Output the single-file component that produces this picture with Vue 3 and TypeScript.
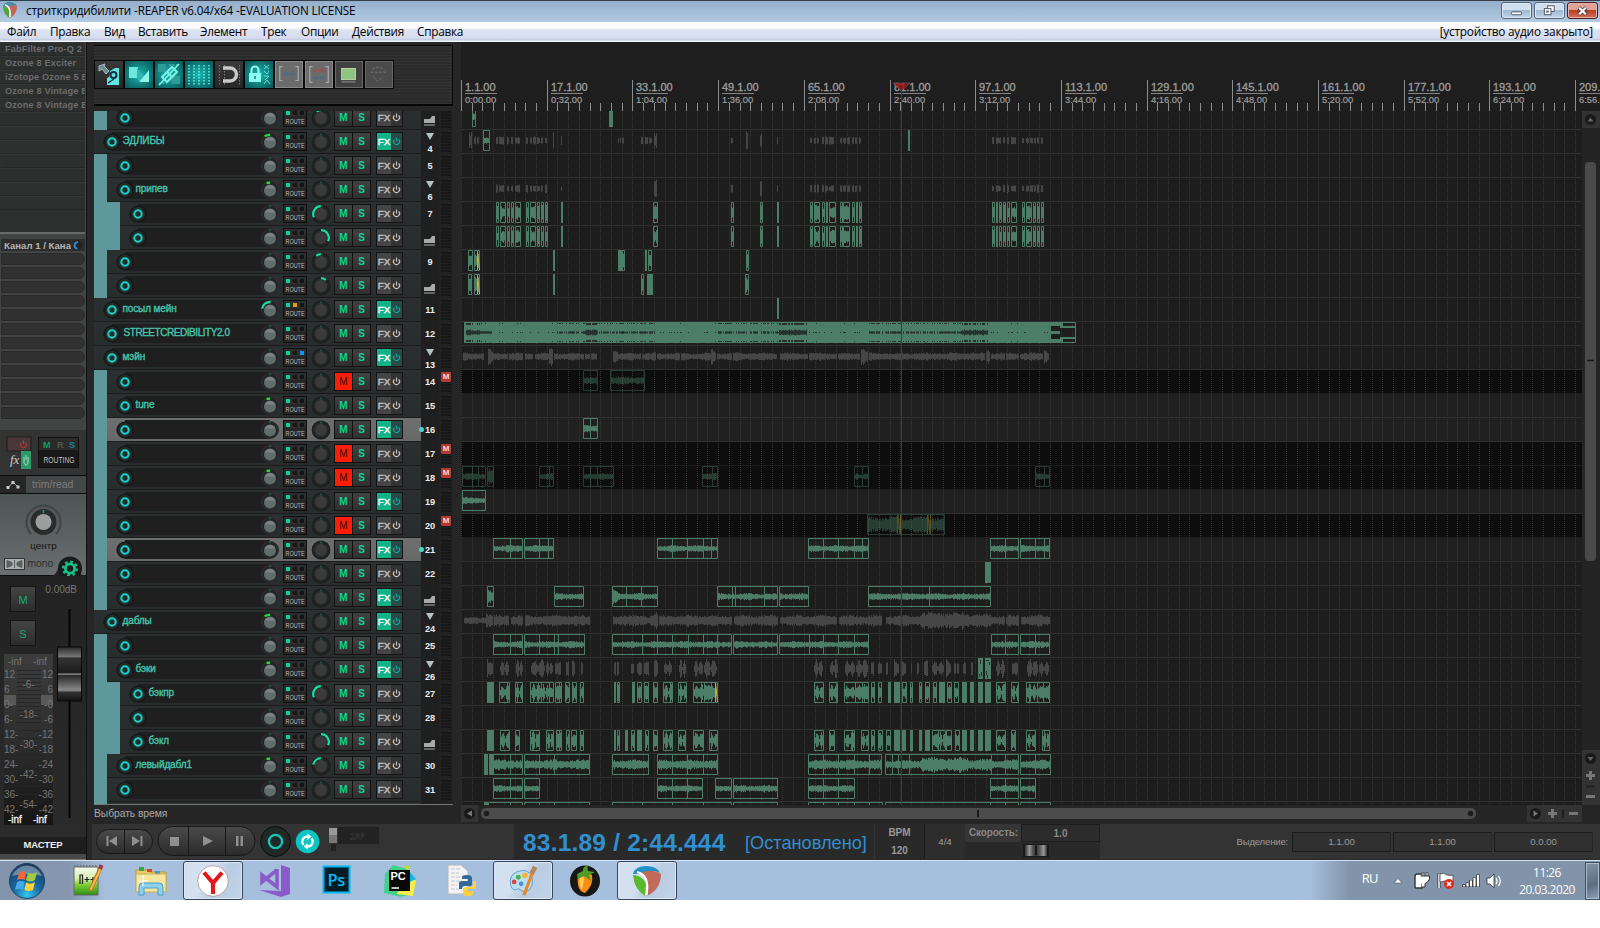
<script setup lang="ts">
interface Track {
  n: number
  d: number
  name?: string
  mute?: boolean
  fx?: boolean
  sel?: boolean
  kind?: 'open' | 'last'
  vol?: number
  pan?: number
  sq?: [number, string]
}

const tracks: Track[] = [
  { n: 3, d: 1, kind: 'last', pan: -35 },
  { n: 4, d: 0, name: 'ЭДЛИБЫ', fx: true, kind: 'open', vol: 2 },
  { n: 5, d: 1 },
  { n: 6, d: 1, name: 'припев', kind: 'open', vol: 1 },
  { n: 7, d: 2, pan: -115 },
  { n: 8, d: 2, kind: 'last', pan: 115 },
  { n: 9, d: 1, pan: -38 },
  { n: 10, d: 1, kind: 'last', pan: 38 },
  { n: 11, d: 0, name: 'посыл мейн', fx: true, vol: 3, sq: [1, '#e59a10'] },
  { n: 12, d: 0, name: 'STREETCREDIBILITY2.0' },
  { n: 13, d: 0, name: 'мэйн', fx: true, kind: 'open', sq: [2, '#0f96e8'] },
  { n: 14, d: 1, mute: true },
  { n: 15, d: 1, name: 'tune', vol: 1 },
  { n: 16, d: 1, fx: true, sel: true },
  { n: 17, d: 1, mute: true },
  { n: 18, d: 1, mute: true, vol: 1 },
  { n: 19, d: 1, fx: true },
  { n: 20, d: 1, mute: true },
  { n: 21, d: 1, fx: true, sel: true },
  { n: 22, d: 1 },
  { n: 23, d: 1, fx: true, kind: 'last' },
  { n: 24, d: 0, name: 'даблы', fx: true, kind: 'open', vol: 2 },
  { n: 25, d: 1 },
  { n: 26, d: 1, name: 'бэки', fx: true, kind: 'open', vol: 1 },
  { n: 27, d: 2, name: 'бэкпр', pan: -115 },
  { n: 28, d: 2 },
  { n: 29, d: 2, name: 'бэкл', kind: 'last', pan: 115 },
  { n: 30, d: 1, name: 'левыйдабл1', vol: 1, pan: -80 },
  { n: 31, d: 1 },
  { n: 32, d: 1 },
]

// Item notation: "a-b-c" = media item from a to c split at b; suffix s = solid, y = crossfade at the end.
const choir =
  '496-499 500-506 507-510 511-514 515-521 526-529 530-536 537-540 541-544 545-548 561-563s 653-658 731-734 760-763 777-779s 810-813 814-820 822-825 826-828s 829-836 840-843 843-850 852-855 856-858s 859-862 992-995 996-998s 999-1002 1003-1006 1007-1010 1011-1017 1022-1025 1026-1032 1033-1036 1037-1040 1041-1044'
const items: Record<number, string> = {
  3: '472-476 609-613s',
  4: '483-490 908-910s',
  7: choir,
  8: choir,
  9: '468-473 474-480y 553-555s 618-622s 622-625 645-647s 648-652 746-749',
  10: '468-472 474-480y 553-555s 641-644 647-653s 745-749',
  11: '777-779s',
  14: '583-598 610-645',
  16: '583-590-598',
  18: '462-472-478-486 487-494 539-549-554 583-590-597-614 702-712-718 854-862-869 1035-1044-1050',
  19: '462-486',
  20: '867-945',
  21: '493-510-523 524-539-548-554 657-672-687-703-711-718 808-823-838-854-862-869 990-1005-1019 1020-1035-1044-1050',
  22: '985-991s',
  23: '487-494 554-584 612-626-641-658 717-732-735-764-778 779-809 868-929-991',
  25: '493-510-523 524-539-554-558-585 612-642-657-672-688-703-717-732 733-778 779-809-823-838-854-869 991-1005-1019 1020-1035-1050',
  26: '978-983s 985-991s',
  27: '487-494s 499-510 515-523 530-541-549-554 555-559-562 565-570 572-577 580-584 614-616s 617-620 632-635s 637-642 644-649 653-658 663-673 678-687 693-704-711-718y 814-824 829-838 844-855-862-869 871-875 878-882 888-891s 894-900s 902-907 910-913 919-922 925-930 933-937 939-945s 947-952 954-959 962-967s 970-974s 978-983s 985-991s 996-1006 1011-1019 1026-1037-1043-1050',
  29: '487-494s 500-510 515-520 530-540 546-554 556-559-562 566-570 571-577 580-584 614-616s 617-620 625-628s 631-635 637-642s 645-649 653-658 663-673 678-686 693-704 709-718 814-824 829-835 844-855 861-869 871-875 878-883 886-891 894-900s 901-906s 910-913s 919-922s 925-930s 932-938-946 946-952 955-960 962-967s 970-974s 978-983s 985-991s 996-1006 1011-1016 1026-1036 1042-1050',
  30: '484-488s 489-493s 493-510-523 524-539-554-590 612-649 657-672-687-703-718 808-823-838-854-869-882 885-892-898-909-991-1005-1019 1020-1035-1051',
  31: '493-510-523 524-540 657-672-687-703 715-732 733-778 808-823-838-855 990-1005-1019 1020-1036',
  32: '484-488s 488-510-523 524-539-554-590 612-642-672-703-732 733-778 808-823-838-854-869-883 885-990-1005-1019 1020-1035-1051',
}
const softBits =
  '496-498 499-504 507-509 511-513 515-520 526-528 530-532 533-536 537-540 541-543 545-547 561-562 654-657t 731-733 760-762t 777-778 810-812 814-816 817-819 822-824 825-828 829-834 840-842 843-846 847-850 852-854 855-857 859-861 992-994 996-1001 1003-1005 1007-1009 1011-1016 1022-1024 1026-1029 1030-1033 1034-1036 1037-1039 1041-1043'
const ghosts: Record<number, string> = {
  4: '469-472t 474-476 477-479 553-554t 618-619 620-621 622-624 641-643 645-648 649-652 746-748t ' + softBits,
  6: softBits,
  13: '463-484 488-493t 493-508 509-523 525-533 535-549 549-553t 554-584 585-590 591-597 613-618t 618-641 642-656 657-680 681-711 711-716t 717-732 733-777 780-808 809-837 838-860 861-868t 869-985 986-990t 991-1005 1006-1019 1020-1043 1044-1049t',
  24: '464-486 486-493t 494-509 511-523 525-590 613-654 654-658t 659-732 734-778 780-837 839-882 886-1005 1006-1019 1021-1050',
  26: '487-493t 500-509 516-523 531-545 546-553 555-561 566-569 572-575 581-583 614-616 617-619 631-634 637-642 644-649 654-658t 664-672 679-686 694-703 704-717 814-823 830-838 845-855 856-868 871-874 878-882 886-888 894-899t 902-906 911-912 917-919 924-928 932-944 946-951t 954-956 957-959t 963-966 971-973 996-1005 1012-1018 1027-1038 1039-1049',
}

function rng(seed: number) {
  let s = seed * 2654435761 % 4294967296
  return () => {
    s = (s * 1664525 + 1013904223) % 4294967296
    return s / 4294967296
  }
}

const C = 10.5
function baseAmp(n: number, x: number): number {
  if (n === 20) return 6.5
  if (n === 30 && x > 920 && x < 991) return x < 968 ? 6 : 4.6
  if (n === 24 && x > 920 && x < 991) return x < 968 ? 7 : 5.6
  if (n === 24) return x < 486 ? 3 : 4.6
  if (n >= 26 && n <= 29) return 6.4
  if (n >= 7 && n <= 10) return 6
  if (n === 30) return 4
  if (n === 4 || n === 6) return 3.4
  if (n === 14 || n === 13) return 3.2
  return 2.8
}

function wave(n: number, a: number, b: number, tall = false): string {
  const r = rng(n * 97 + a)
  let p = ''
  const w = b - a
  for (let x = a; x < b; x++) {
    let amp = tall ? 7 : baseAmp(n, x)
    const t = (x - a + 0.5) / w
    if (n >= 26 && n <= 29 && w > 6) amp *= 0.25 + Math.abs(Math.sin(t * Math.PI * 2))
    const slow = 0.95 + 0.14 * Math.sin(x / 4.3 + n)
    let h = Math.max(1.5, amp * slow * (0.72 + 0.5 * r()))
    if (tall && w > 4) h *= 1.2 - 0.6 * t
    if (n === 23 && x >= 612 && x < 620) h += (620 - x) * 0.6
    h = Math.min(9.5, h)
    p += `M${x + 0.5} ${(C - h).toFixed(1)}V${(C + h * (0.9 + 0.25 * r())).toFixed(1)}`
  }
  return p
}

interface LaneArt { frames: string; fills: string; waves: string; ghost: string; fades: string; notch: string }
function art(t: Track): LaneArt {
  const out: LaneArt = { frames: '', fills: '', waves: '', ghost: '', fades: '', notch: '' }
  for (const tok of (items[t.n] ?? '').split(' ').filter(Boolean)) {
    const flag = /[sy]$/.exec(tok)?.[0]
    const xs = tok.replace(/[sy]$/, '').split('-').map(Number)
    const a = xs[0]
    const b = xs[xs.length - 1]
    if (flag === 's') {
      out.fills += `M${a} 0H${b}V21H${a}Z`
      continue
    }
    out.frames += `M${a + 0.5} .5H${b - 0.5}V20.5H${a + 0.5}Z`
    for (const m of xs.slice(1, -1)) out.frames += `M${m + 0.5} 0V21`
    for (let i = 0; i < xs.length - 1; i++) {
      out.waves += wave(t.n, xs[i] + 1, xs[i + 1], a === 487 && (t.n === 18 || t.n === 23))
    }
    if (flag === 'y') out.fades += `M${b - 2.5} 1L${b - 0.5} 20M${b - 2.5} 20V1`
  }
  if (t.n === 20) out.fades = 'M897.5 1V20M898 1L900 20M900.5 1V20M927.5 1V20M928 1L930 20M930.5 1V20'
  for (const tok of (ghosts[t.n] ?? '').split(' ').filter(Boolean)) {
    const [a, b] = tok.replace('t', '').split('-').map(Number)
    out.ghost += wave(t.n, a, b, tok.endsWith('t'))
  }
  if (t.n === 12) {
    out.fills = 'M464 0H1051V21H464ZM1051 0H1063V4H1051ZM1051 17H1063V21H1051ZM1060 4H1075V6H1060ZM1060 15H1075V17H1060ZM1051 9H1060V12H1051Z'
    out.frames = 'M464.5 .5H1075.5V20.5H464.5Z'
    const r = rng(5)
    for (let x = 466; x < 1050; x++) {
      const thick = x < 480 || (x > 584 && x < 597) || (x > 778 && x < 807) || (x > 960 && x < 988)
      const thin = (x > 555 && x < 656) || (x > 717 && x < 778) || (x > 868 && x < 961)
      const v = r()
      const h = thick ? 1.7 + v * 1.4 : thin ? (v > 0.25 ? 0.5 + v * 0.9 : 0) : x < 492 ? 1.2 : v > 0.78 ? 0.5 : 0
      if (h) out.notch += `M${x + 0.5} ${C - h}V${C + h}`
      if ((thick && v > 0.2) || (thin && v > 0.5) || v > 0.92) {
        out.notch += `M${x + 0.5} 1V${thick ? 3 : 2}M${x + 0.5} ${thick ? 18 : 19}V20`
      }
    }
  }
  if (t.n === 26) out.notch = 'M980.5 2V6M981.5 14V18M979.5 16V19M986 2.5H989M987.5 17V20M989.5 4V7M986.5 13V17'
  return out
}
const lanes = tracks.map((t) => ({ t, art: art(t) }))

const PITCH = 85.7
const gridX: number[] = []
for (let i = 0; i <= 104; i++) gridX.push(Math.round(461 + (i * PITCH) / 8) + 0.5)
const gridPath = gridX.map((x) => `M${x} 0V694`).join('')
const tickPath = gridX.map((x, i) => (i % 8 ? `M${x} 21V29` : `M${x} -2V29`)).join('')
const marks = Array.from({ length: 14 }, (_, i) => {
  const sec = i * 32
  return {
    x: Math.round(461 + i * PITCH) + 4,
    bar: `${1 + i * 16}.1.00`,
    time: `${Math.floor(sec / 60)}:${String(sec % 60).padStart(2, '0')}.00`,
  }
})

function arc(r: number, a0: number, a1: number): string {
  const pt = (a: number) => {
    const k = (a * Math.PI) / 180
    return `${(10 + r * Math.sin(k)).toFixed(2)} ${(10 - r * Math.cos(k)).toFixed(2)}`
  }
  return `M${pt(Math.min(a0, a1))}A${r} ${r} 0 0 1 ${pt(Math.max(a0, a1))}`
}
function volArc(v?: number): string {
  if (v === 3) return arc(8, -80, 4)
  if (v === 2) return 'M4.5 4L10 2.6'
  return v === 1 ? 'M6.5 3L10 2.6' : 'M10 1V3'
}

const menu: [string, number][] = [
  ['Файл', 43], ['Правка', 54], ['Вид', 34], ['Вставить', 62], ['Элемент', 61],
  ['Трек', 40], ['Опции', 51], ['Действия', 65], ['Справка', 60],
]
const inserts = ['FabFilter Pro-Q 2', 'Ozone 8 Exciter', 'iZotope Ozone 5 E', 'Ozone 8 Vintage E', 'Ozone 8 Vintage E', '', '', '', '', '', '', '']
const leftScale = ['12', '6', '0-', '6-', '12-', '18-', '24-', '30-', '36-', '42-']
const rightScale = ['12', '6', '-0', '-6', '-12', '-18', '-24', '-30', '-36', '-42']
const midScale = ['-6-', '-18-', '-30-', '-42-', '-54-']
</script>

<template>
  <div class="screen">
    <header class="title">
      <svg class="logo" viewBox="0 0 16 18"><path d="M1 5Q4 0 9 1Q15 2 15 6Q10 4 6 6Q3 6 1 5Z" fill="#4a8fa8" /><path d="M1 5Q5 6 8 9L7 17Q1 12 1 5Z" fill="#4ea53c" /><path d="M8 5Q15 3 15 7Q14 14 8 17Q9 11 5 6Z" fill="#c4665a" /><path d="M3 4Q9 5 8 16" stroke="#fff" fill="none" stroke-width="1.6" /></svg>
      <span class="caption">стриткридибилити -REAPER v6.04/x64 -EVALUATION LICENSE</span>
      <div class="winbtns">
        <i class="wb"><svg viewBox="0 0 30 16"><rect x="9.500" y="9.500" width="11" height="3" rx="1" fill="#fff" stroke="#4b5463" /></svg></i>
        <i class="wb"><svg viewBox="0 0 30 16"><rect x="13" y="3" width="7" height="6" fill="#fff" stroke="#4b5463" /><rect x="9.500" y="6" width="7" height="6.500" fill="#fff" stroke="#4b5463" /><rect x="12" y="8.500" width="2" height="1.500" fill="#7d93ad" stroke="#4b5463" stroke-width=".6" /></svg></i>
        <i class="wb close"><svg viewBox="0 0 30 16"><path d="M11 5L19 12M19 5L11 12" stroke="#4b3b40" stroke-width="4.400" /><path d="M11.500 5L18.500 12M18.500 5L11.500 12" stroke="#fff" stroke-width="2.400" /></svg></i>
      </div>
    </header>
    <nav class="menu">
      <span v-for="m in menu" :key="m[0]" :style="{ width: m[1] + 'px' }">{{ m[0] }}</span>
      <span class="audio">[устройство аудио закрыто]</span>
    </nav>

    <main class="app">
      <aside class="mixer">
        <div class="inserts">
          <div v-for="(s, i) in inserts" :key="i">{{ s }}</div>
        </div>
        <div class="sends">
          <div class="send"><span>Канал 1 / Канал</span><svg viewBox="0 0 10 10"><circle cx="5" cy="5" r="4.500" fill="#222" /><path d="M5.500 2A3 3 0 0 0 5 8" stroke="#2a8fd8" stroke-width="1.800" fill="none" /></svg></div>
          <div v-for="i in 12" :key="i" class="slot"></div>
        </div>
        <div class="fxroute">
          <svg viewBox="0 0 87 45">
            <rect x="7" y="7" width="24" height="14" fill="#4a3838" stroke="#1c1c1c" />
            <path d="M21.500 12.500A3 3 0 1 0 25.500 12.500M23.500 10.500V14" stroke="#e0322a" fill="none" />
            <rect x="21" y="21" width="10" height="18" fill="#2c9a6c" />
            <path d="M24 27V33Q26 37 28 33V27M26 25V30" stroke="#a6dfc4" fill="none" />
            <text x="10" y="34" class="fxi">fx</text>
            <rect x="38.500" y="7.500" width="40" height="30" fill="#191919" stroke="#111" />
            <rect x="39" y="8" width="39" height="12" fill="#2b2b2b" />
            <text x="43" y="18" class="mrs" fill="#129a68">M</text><text x="57" y="18" class="mrs" fill="#555">R</text><text x="69" y="18" class="mrs" fill="#1a7ea8">S</text>
            <text x="43.500" y="33" class="rt" textLength="31" lengthAdjust="spacingAndGlyphs">ROUTING</text>
          </svg>
        </div>
        <div class="trim"><svg viewBox="0 0 26 17"><path d="M8 12L13 6L18 11" stroke="#aaa" fill="none" /><path d="M6.500 10h3v3h-3zM11.500 5h3v3h-3zM16.500 9.500h3v3h-3z" fill="#ccc" /></svg><span>trim/read</span></div>
        <div class="panbox">
          <svg viewBox="0 0 87 82">
            <path d="M31 40A17 17 0 1 1 56 40" stroke="#3f4444" stroke-width="2" fill="none" />
            <circle cx="43.500" cy="28" r="13" fill="#2a2c2c" /><circle cx="43.500" cy="28" r="8" fill="#9c9e9e" />
            <path d="M43.500 16V19" stroke="#17a374" stroke-width="1.500" />
            <text x="43.500" y="55" class="cen">центр</text>
            <rect x="4.500" y="64.500" width="20" height="11" fill="#a9b1b1" stroke="#333" /><path d="M7 66.500L12 68.500V71.500L7 73.500ZM22 66.500L17 68.500V71.500L22 73.500ZM14.500 66V74" fill="#59605f" stroke="#59605f" />
            <text x="27.500" y="73" class="mono">mono</text>
            <path d="M0 82H50Q57 81 58 74L87 82Z" fill="#222" />
            <circle cx="70" cy="74.500" r="12" fill="#1b1b1b" />
            <circle cx="70" cy="74.500" r="4.600" fill="none" stroke="#15c28c" stroke-width="2.800" />
            <circle cx="70" cy="74.500" r="6.800" fill="none" stroke="#15c28c" stroke-width="2.400" stroke-dasharray="2.670 2.670" />
          </svg>
        </div>
        <div class="strip">
          <svg viewBox="0 0 87 261">
            <defs>
              <linearGradient id="bt" x1="0" y1="0" x2="0" y2="1"><stop offset="0" stop-color="#454545" /><stop offset="1" stop-color="#2b2b2b" /></linearGradient>
              <linearGradient id="mt" x1="0" y1="0" x2="0" y2="1"><stop offset="0" stop-color="#3c3c3c" /><stop offset=".5" stop-color="#2e2e2e" /><stop offset="1" stop-color="#151515" /></linearGradient>
              <linearGradient id="fd" x1="0" y1="0" x2="0" y2="1"><stop offset="0" stop-color="#2a2a2a" /><stop offset=".18" stop-color="#777" /><stop offset=".2" stop-color="#333" /><stop offset=".48" stop-color="#1c1c1c" /><stop offset=".5" stop-color="#999" /><stop offset=".53" stop-color="#282828" /><stop offset=".8" stop-color="#8a8a8a" /><stop offset=".84" stop-color="#333" /><stop offset="1" stop-color="#111" /></linearGradient>
            </defs>
            <text x="77" y="17" class="db">0.00dB</text>
            <rect x="10.500" y="10.500" width="25" height="25" fill="url(#bt)" stroke="#141414" /><text x="23" y="27.500" class="ms">M</text>
            <rect x="10.500" y="44.500" width="25" height="25" fill="url(#bt)" stroke="#141414" /><text x="23" y="61.500" class="ms">S</text>
            <rect x="4" y="78" width="49" height="171" fill="url(#mt)" />
            <path d="M17 94.500H41M17 98.500H41M17 102.500H41M17 106.500H41M17 110.500H41M17 114.500H41M17 118.500H41M17 122.500H41M17 126.500H41M17 130.500H41M17 134.500H41M17 138.500H41M17 142.500H41M17 146.500H41M17 154.500H41M17 162.500H41M17 170.500H41M17 178.500H41M17 186.500H41M17 194.500H41M17 202.500H41M17 210.500H41M17 218.500H41M17 226.500H41" stroke="#262626" />
            <path d="M4 119H16V129H4ZM41 119H53V129H41Z" fill="#585858" />
            <g class="sc">
              <text x="8" y="89">-inf</text><text x="33" y="89">-inf</text>
              <text v-for="(s, i) in leftScale" :key="'l' + i" x="4" :y="102 + i * 15">{{ s }}</text>
              <text v-for="(s, i) in rightScale" :key="'r' + i" x="53" :y="102 + i * 15" text-anchor="end">{{ s }}</text>
              <text v-for="(s, i) in midScale" :key="'m' + i" x="28.500" :y="112 + i * 30" text-anchor="middle">{{ s }}</text>
              <text x="8" y="247" class="lit">-inf</text><text x="33" y="247" class="lit">-inf</text>
            </g>
            <path d="M69.500 33V242" stroke="#050505" stroke-width="2" />
            <rect x="57.500" y="71" width="24" height="54" fill="url(#fd)" stroke="#080808" />
          </svg>
        </div>
        <div class="master">МАСТЕР</div>
        <div class="mfoot"></div>
      </aside>

      <section class="right">
        <div class="work">
          <div class="tcp">
            <div class="toolbar">
              <div class="tools">
                <i class="tb"><svg viewBox="0 0 28 27"><path d="M4 5L10 3L9 5L14 10L11 13L7 8L4 10Z" fill="#6d8a8c" stroke="#a7bcbc" /><path d="M12 24V17Q15 17 15 10L20 7H24V24Z" fill="#5fe6e0" /><circle cx="18.500" cy="14" r="4" fill="#134" /><circle cx="18.500" cy="14" r="2" fill="#5fe6e0" /><path d="M13 22L19 18" stroke="#134" stroke-width="1.500" /></svg></i>
                <i class="tb on"><svg viewBox="0 0 28 27"><path d="M4 6H13V17H4Z" fill="#6fe9df" /><path d="M12 7L20 16V21H14L12 17Z" fill="#2fb5ae" /><path d="M15 20L24 9V21H15Z" fill="#8ff5ea" /></svg></i>
                <i class="tb on"><svg viewBox="0 0 28 27"><path d="M3 3H11V11H3ZM17 15H25V23H17Z" fill="#2f9c97" /><path d="M4 24L24 3" stroke="#7df3e8" stroke-width="1.800" /><path d="M7 16L12 11L17 16L12 21ZM12 11L17 6L22 11L17 16Z" stroke="#7df3e8" stroke-width="2" fill="none" /><path d="M14 4H24M4 22H12" stroke="#5fd9cf" stroke-dasharray="2 1.500" /></svg></i>
                <i class="tb on"><svg viewBox="0 0 28 27"><path d="M4 4V24M9 4V24M14 4V24M19 4V24M24 4V24" stroke="#6ff7ec" stroke-width="1.400" stroke-dasharray="1.500 1.500" /></svg></i>
                <i class="tb"><svg viewBox="0 0 28 27"><path d="M4.500 4V24M9.500 4V24M24.500 4V24" stroke="#777" stroke-dasharray="1.500 1.500" /><path d="M8 7H15A6.500 6.500 0 0 1 15 20H8" stroke="#c9c9c9" stroke-width="3.400" fill="none" /></svg></i>
                <i class="tb on"><svg viewBox="0 0 28 27"><rect x="4" y="12" width="12" height="9" fill="#8bfff2" /><path d="M6.500 12V9A3.500 3.500 0 0 1 13.500 9V12" stroke="#8bfff2" stroke-width="2.200" fill="none" /><path d="M10 15V18" stroke="#0b7a76" stroke-width="1.500" /><path d="M19 4L24 8M24 4L19 8M19 10L22 13L24 10M19 15H24L20 19M19 23L22 19L25 23" stroke="#5fd9cf" fill="none" /></svg></i>
                <i class="tb off"><svg viewBox="0 0 28 27"><path d="M7 5H4V20H7M21 5H24V20H21" stroke="#a8a8a8" stroke-width="1.300" fill="none" /><path d="M7 13H21M10 10V16L13 13ZM18 10V16L15 13Z" stroke="#496a86" fill="#496a86" /></svg></i>
                <i class="tb off"><svg viewBox="0 0 28 27"><path d="M7 5H4V22H7M21 5H24V22H21" stroke="#a8a8a8" stroke-width="1.300" fill="none" /><path d="M7 9H21M10 7V11L13 9ZM18 7V11L15 9Z" stroke="#9a5050" fill="#9a5050" /><path d="M7 17H21M10 15V19L13 17ZM18 15V19L15 17Z" stroke="#496a86" fill="#496a86" /></svg></i>
                <i class="tb dim"><svg viewBox="0 0 28 27"><rect x="6" y="7" width="15" height="12" fill="#8fc583" stroke="#bdd8a8" /><path d="M6 21.500H21" stroke="#999" /></svg></i>
                <i class="tb off dark"><svg viewBox="0 0 28 27"><path d="M5 11H21M7 8Q13 3 19 8M8 16L13 21L18 16" stroke="#777" fill="none" stroke-dasharray="3 1.500" /></svg></i>
              </div>
            </div>
            <div class="tracks">
              <div v-for="t in tracks" :key="t.n" class="track" :class="{ sel: t.sel }">
                <div class="depth" :style="{ width: t.d * 13 + 'px' }"></div>
                <div class="panel">
                  <svg class="arm" viewBox="0 0 20 20"><circle cx="10" cy="10" r="8.600" fill="#151717" /><circle cx="10" cy="10" r="7.200" fill="#252a2a" /><circle cx="10" cy="10" r="3.700" fill="none" stroke="#14d2c6" stroke-width="2.100" /></svg>
                  <div class="name" :class="{ tight: t.n === 12 }">{{ t.name }}</div>
                  <svg class="knob" viewBox="0 0 20 20"><circle cx="10" cy="10" r="8.500" fill="#252525" stroke="#303030" /><circle cx="10" cy="10.500" r="6" fill="#626c6c" /><path d="M5 8.500A5.500 5.500 0 0 1 15 8.500Z" fill="#7b8383" /><path :d="volArc(t.vol)" :stroke="t.vol === 3 ? '#17dc9c' : t.vol ? '#1fe03a' : '#17844f'" :stroke-width="t.vol ? 2.3 : 1" fill="none" /></svg>
                  <div class="route">
                    <div class="sqs"><i class="g"></i><i :style="{ background: t.sq && t.sq[0] === 1 ? t.sq[1] : '#151717' }"></i><i :style="{ background: t.sq && t.sq[0] === 2 ? t.sq[1] : '#151717' }"></i></div>
                    <svg viewBox="0 0 22 9"><text x="1.500" y="7.500" textLength="19" lengthAdjust="spacingAndGlyphs">ROUTE</text></svg>
                  </div>
                  <svg class="pan" viewBox="0 0 20 20"><circle cx="10" cy="10" r="8.800" fill="#252727" stroke="#1b1c1c" stroke-width="1.200" /><circle cx="10" cy="10" r="6" fill="#3a3a3a" /><path v-if="t.pan" :d="arc(7.8, 0, t.pan)" stroke="#14e0a0" stroke-width="2.2" fill="none" /><path v-else d="M10 1.500V3.500" stroke="#17844f" /></svg>
                  <div class="btns"><b :class="{ muted: t.mute }">M</b><b>S</b></div>
                  <div class="fx" :class="{ lit: t.fx }"><span>FX</span><svg viewBox="0 0 12 17"><path d="M3.600 6.200A3.300 3.300 0 1 0 8.400 6.200M6 4V8.500" fill="none" stroke-width="1.300" stroke="currentColor" /></svg></div>
                </div>
                <div class="num" :class="t.kind">
                  <i v-if="t.sel" class="dot"></i>
                  <svg v-if="t.kind === 'open'" viewBox="0 0 8 7"><path d="M0 0H8L4 7Z" fill="#b4c4c6" /></svg>
                  <svg v-if="t.kind === 'last'" class="fold" viewBox="0 0 12 10"><path d="M0 3H6L8 0H11V7H0Z" fill="#aaa" /><path d="M0 9H11" stroke="#aaa" /></svg>
                  <span v-else>{{ t.n }}</span>
                </div>
                <div class="vu"><b v-if="t.mute">M</b></div>
              </div>
            </div>
          </div>

          <div class="arrange">
            <svg class="ruler" viewBox="461 -40 1139 69">
              <path :d="tickPath" stroke="#8c8c8c" />
              <g v-for="m in marks" :key="m.x">
                <text :x="m.x" y="9" class="bar">{{ m.bar }}</text>
                <path :d="`M${m.x} 11.500H${m.x + 32}`" stroke="#858585" />
                <text :x="m.x" y="21" class="time">{{ m.time }}</text>
              </g>
              <path d="M893 1H910L901.500 9Z" fill="#a01515" opacity=".85" stroke="#666" stroke-width=".6" />
              <path d="M901.500 8V29" stroke="#b30a0a" />
            </svg>
            <div class="field">
              <div class="lanes">
                <svg class="grid" viewBox="461 0 1121 694"><path :d="gridPath" stroke="#363636" stroke-dasharray="1 1" /></svg>
                <div v-for="l in lanes" :key="l.t.n" class="lane" :class="{ muted: l.t.mute, alt: l.t.n > 14 && l.t.n < 22 && !l.t.mute }">
                  <svg viewBox="461 0 1121 24" :class="{ faded: l.t.mute }">
                    <path :d="l.art.ghost" stroke="#464646" />
                    <path :d="l.art.fills" fill="#4c7e67" />
                    <path :d="l.art.frames" stroke="#4c7e67" fill="none" />
                    <path :d="l.art.waves" stroke="#4c7e67" />
                    <path :d="l.art.notch" stroke="#26322d" />
                    <path :d="l.art.fades" stroke="#c9ae2c" fill="none" />
                  </svg>
                </div>
                <svg class="grid cursor" viewBox="461 0 1121 694"><path d="M901.500 0V694" stroke="#b30a0a" /></svg>
              </div>
              <svg class="vbar" viewBox="0 0 18 694">
                <rect width="18" height="17" fill="#333" /><circle cx="8.500" cy="8.500" r="5.500" fill="#1a1a1a" /><path d="M5.500 10.500H11.500L8.500 6.500Z" fill="#666" />
                <rect x="3" y="51" width="11" height="399" rx="4" fill="#4a4a4a" /><path d="M5 249.500H12" stroke="#151515" stroke-width="1.500" />
                <rect y="639" width="18" height="55" fill="#333" /><circle cx="8.500" cy="647.500" r="5.500" fill="#1a1a1a" /><path d="M5.500 646H11.500L8.500 650Z" fill="#666" />
                <path d="M4 664.500H13M8.500 660V669M4 685.500H13" stroke="#777" stroke-width="3" /><path d="M4 675.500H13" stroke="#222" stroke-width="2" />
              </svg>
            </div>
          </div>
        </div>

        <div class="under">
          <div class="hint">Выбрать время</div>
          <svg class="hbar" viewBox="461 0 1139 19">
            <rect x="461" width="17" height="17" fill="#333" /><circle cx="469.500" cy="8.500" r="5.500" fill="#1a1a1a" /><path d="M472 5.500V11.500L467 8.500Z" fill="#777" />
            <rect x="481" y="3" width="995" height="11" rx="5" fill="#4c4c4c" /><circle cx="486.500" cy="8.500" r="2.700" fill="#1d1d1d" /><circle cx="1470.500" cy="8.500" r="2.700" fill="#1d1d1d" /><path d="M978 5V12" stroke="#191919" stroke-width="2" />
            <rect x="1527" width="55" height="17" fill="#333" /><circle cx="1535.500" cy="8.500" r="5.500" fill="#1a1a1a" /><path d="M1533.500 5.500V11.500L1538 8.500Z" fill="#777" /><path d="M1548 8.500H1557M1552.500 4V13M1569 8.500H1578" stroke="#777" stroke-width="3" /><path d="M1563 4V13" stroke="#222" stroke-width="2" />
          </svg>
        </div>

        <div class="transport">
          <svg class="deck" viewBox="92 0 422 35">
            <defs><linearGradient id="pl" x1="0" y1="0" x2="0" y2="1"><stop offset="0" stop-color="#4a4a4a" /><stop offset="1" stop-color="#2b2b2b" /></linearGradient></defs>
            <rect x="96.500" y="5.500" width="56" height="24" rx="12" fill="url(#pl)" stroke="#181818" /><path d="M124.500 5V30" stroke="#181818" />
            <path d="M107.500 12V22M141.500 12V22" stroke="#909090" stroke-width="2" /><path d="M117 12V22L109 17ZM132 12V22L140 17Z" fill="#909090" />
            <rect x="158" y="2.500" width="97" height="29" rx="14.500" fill="url(#pl)" stroke="#181818" /><path d="M188.500 3V31M225.500 3V31" stroke="#181818" />
            <path d="M170 13H179V22H170ZM203 12V22L213 17ZM236 12H238.500V22H236ZM240.500 12H243V22H240.500Z" fill="#909090" />
            <circle cx="275.500" cy="17.500" r="15" fill="#1f2727" stroke="#0d0d0d" /><circle cx="275.500" cy="17.500" r="6.600" fill="none" stroke="#18c2b4" stroke-width="2.400" />
            <circle cx="307.500" cy="17.500" r="11.800" fill="#0cc5c2" /><path d="M303.500 20.800A5 5 0 0 1 308 12.600M311.500 14.200A5 5 0 0 1 307 22.400" stroke="#fff" stroke-width="2.200" fill="none" /><path d="M307 9.500L311.500 12.500L307.500 16ZM308 25.500L303.500 22.500L307.500 19Z" fill="#fff" />
            <rect x="338" y="3" width="41" height="17" fill="#222" /><rect x="329" y="4" width="8" height="15" fill="#777" /><rect x="329" y="4" width="8" height="7" fill="#999" /><path d="M331 20H336V27H331Z" fill="#222" /><text x="350" y="15" class="rate" textLength="15">1.0.0</text>
          </svg>
          <div class="status"><b>83.1.89 / 2:44.444</b><span>[Остановлено]</span></div>
          <div class="bpm"><span>BPM</span><span>120</span></div>
          <div class="sig">4/4</div>
          <div class="speed">
            <div class="sp1"><span>Скорость:</span><b>1.0</b></div>
            <svg viewBox="0 0 135 15"><defs><linearGradient id="sl"><stop offset="0" stop-color="#333" /><stop offset=".2" stop-color="#999" /><stop offset=".35" stop-color="#555" /><stop offset=".5" stop-color="#333" /><stop offset=".65" stop-color="#555" /><stop offset=".85" stop-color="#999" /><stop offset="1" stop-color="#333" /></linearGradient></defs><rect x="58" width="26" height="13" fill="#191919" /><rect x="60" y="1" width="22" height="11" fill="url(#sl)" /><path d="M71 2V11" stroke="#0c0c0c" stroke-width="1.500" /></svg>
          </div>
          <div class="selection"><span>Выделение:</span><i>1.1.00</i><i>1.1.00</i><i>0.0.00</i></div>
        </div>
      </section>
    </main>

    <footer class="taskbar">
      <svg class="ti start" viewBox="0 0 40 38"><defs><radialGradient id="orb" cx=".5" cy=".9" r=".9"><stop offset="0" stop-color="#35c5f2" /><stop offset=".45" stop-color="#17679f" /><stop offset="1" stop-color="#1a3a5c" /></radialGradient></defs><circle cx="20" cy="19" r="17.500" fill="url(#orb)" stroke="#1d4263" /><path d="M5 14A16 16 0 0 1 35 14Q20 10 5 14Z" fill="#fff" opacity=".35" /><path d="M12 11Q15 8 19 10L18 18Q14 16 10 18Z" fill="#f2683c" /><path d="M21 11Q26 13 30 10L28 18Q24 21 19 18Z" fill="#9fcb3d" /><path d="M10 20Q14 18 17.500 20L16 28Q12 26 8 28Z" fill="#45a8ec" /><path d="M19 20.500Q24 23 28 20L26 28Q22 30 17.500 28Z" fill="#ffd13b" /></svg>
      <svg class="ti npp" viewBox="0 0 32 38"><defs><linearGradient id="ng" x1="0" y1="0" x2="0" y2="1"><stop offset="0" stop-color="#f4faef" /><stop offset=".4" stop-color="#d7efb0" /><stop offset=".65" stop-color="#7ccb2e" /><stop offset="1" stop-color="#2b8f1a" /></linearGradient></defs><path d="M1 5H25V33H1Z" fill="url(#ng)" stroke="#666" /><path d="M1 4H25" stroke="#777" stroke-width="2" stroke-dasharray="1.500 1.500" /><path d="M7 22V13H9.500V22M11.500 17.500H16.500M14 15V20M17.500 17.500H22.500M20 15V20" stroke="#222" stroke-width="1.200" fill="none" /><path d="M17 29L28 5" stroke="#b87420" stroke-width="4" /><path d="M17.500 28L27.500 7" stroke="#f7b84a" stroke-width="2" /><path d="M27 7L28.500 3" stroke="#a03a4a" stroke-width="4" /></svg>
      <svg class="ti exp" viewBox="0 0 32 38"><path d="M1 8H12L14 10H31V29H1Z" fill="#e9cd6a" stroke="#b89a3c" /><path d="M4 5H9V9H4Z" fill="#3aa648" /><path d="M12 7H17V10H12Z" fill="#d24a2c" /><path d="M20 9H25V12H20Z" fill="#3c9ad8" /><path d="M1 12H31V30H1Z" fill="#f6e7a0" stroke="#c7ae55" /><path d="M4 33V25Q4 21 8 21H24Q28 21 28 25V33H23V26H9V33Z" fill="#8fd0ee" stroke="#4d9cc7" /><path d="M8 13V24M3 19H13" stroke="#fff" /></svg>
      <div class="task yb"><svg viewBox="0 0 32 32"><circle cx="16" cy="16" r="15.300" fill="#fff" stroke="#a88" stroke-width=".7" /><path d="M7 7.500L16 18L25 7.500M16 17V29" stroke="#e01a1a" stroke-width="4.200" fill="none" /></svg></div>
      <svg class="ti vs" viewBox="0 0 34 38"><path d="M23 3L32 6V32L23 35L1 28L23 29Z" fill="#8a5cc9" /><path d="M19 8V25L4 13V20L19 8M4 12V21M19 7V26" stroke="#8a5cc9" stroke-width="3.600" fill="none" /></svg>
      <svg class="ti ps" viewBox="0 0 30 38"><rect x="1.500" y="4.500" width="26" height="26" fill="#001d26" stroke="#00b7f0" stroke-width="2" /><text x="5.500" y="24" class="pst">Ps</text></svg>
      <svg class="ti pc" viewBox="0 0 34 38"><path d="M2 12L10 3L20 6L26 3L27 12L33 18L28 32L18 35L1 31Z" fill="#42d08a" /><path d="M25 8L33 19L30 34L14 32Z" fill="#f3ee4c" /><path d="M26 9L33 17L27 20Z" fill="#12b5ea" /><path d="M20 5L26 3L27 10Z" fill="#b3e04c" /><rect x="6" y="8" width="21" height="21" fill="#090909" /><text x="7.500" y="18" class="pct">PC</text><path d="M8.500 26H16" stroke="#fff" stroke-width="1.500" /></svg>
      <svg class="ti py" viewBox="0 0 34 38"><path d="M1 3H14L21 9V32H1Z" fill="#f3f3f3" stroke="#b6b6b6" /><path d="M4 7H13M4 11H12M4 15H16M4 19H14M4 23H10M4 27H12" stroke="#c3c8cc" stroke-dasharray="4 1" /><path d="M12 27V21Q12 19 15 19H21V17H15V15Q15 13 20 13Q25 13 25 16V22Q25 24 22 24H18Q15 24 15 27Z" fill="#35699c" /><path d="M29 19V25Q29 27 26 27H21V29H26V31Q26 34 21 34Q16 34 16 31V27Q16 25 19 25H23Q26 25 26 22V19Z" fill="#ffd23c" /></svg>
      <div class="task pb"><svg viewBox="0 0 32 34"><path d="M3 22Q0 11 10 7Q21 3 25 12Q28 21 22 27Q18 30 14 27Q11 24 9 26Q5 28 3 22Z" fill="#b9def2" stroke="#5c9cc4" /><circle cx="6.500" cy="18" r="2.500" fill="#d9483a" /><circle cx="11" cy="13" r="2.600" fill="#53b045" /><circle cx="18" cy="11" r="3" fill="#f2b632" /><circle cx="14" cy="20" r="2.500" fill="#4b93cf" /><path d="M17 32L26 8" stroke="#e68428" stroke-width="3.200" /><path d="M25 9L29 2" stroke="#b98457" stroke-width="5" /></svg></div>
      <svg class="ti fl" viewBox="0 0 32 38"><ellipse cx="16" cy="19" rx="15" ry="15.500" fill="#171717" /><path d="M9 13Q16 8 23 13Q25 23 16 31Q7 29 9 13Z" fill="#f98e14" /><path d="M11 15Q14 12 15 16Q14 25 13 28Q9 23 11 15Z" fill="#ffcb52" /><path d="M8 12L14 9Q13 5 19 3Q18 7 19 9L26 10L20 13L22 19L15 14L9 17Z" fill="#4c9c25" /></svg>
      <div class="task rb"><svg viewBox="0 0 30 32"><path d="M1 9Q3 1 14 1Q25 1 28 8Q20 4 13 8Q7 9 1 9Z" fill="#2490c8" /><path d="M1 10Q9 10 14 18L13 31Q2 24 1 10Z" fill="#58ba2c" /><path d="M9 8Q20 3 29 9Q29 24 15 31Q18 15 9 8Z" fill="#c26a58" /><path d="M5 7Q18 10 14.500 30" stroke="#fff" stroke-width="2.200" fill="none" /></svg></div>
      <div class="tray">
        <span class="ru">RU</span>
        <svg viewBox="0 0 116 22">
          <path d="M4 13H12L8 8.500Z" fill="#fff" stroke="#51627a" stroke-width=".7" />
          <path d="M33 4H27Q25 4 25 7V17Q25 18 26 18H32V13" fill="#fff" stroke="#333" stroke-width="1.400" /><path d="M33 2V6M37 2V6" stroke="#333" stroke-width="2.500" /><path d="M33 2.500V6M37 2.500V6" stroke="#fff" stroke-width="1" /><path d="M30.500 6H39.500V9Q38 13 35 13.500V17H32" stroke="#333" fill="#fff" stroke-width="1" />
          <path d="M49 3V18" stroke="#333" stroke-width="3" /><path d="M49 3.500V18" stroke="#fff" stroke-width="1.500" /><path d="M50 4Q54 2 57 5Q61 6 63 5V12Q58 13 55 11L50 12Z" fill="#fff" stroke="#444" stroke-width=".8" /><circle cx="59" cy="14" r="5" fill="#dd2a1c" /><path d="M57 12L61 16M61 12L57 16" stroke="#fff" stroke-width="1.600" />
          <path d="M74 14.500V17M77.500 12.500V17M81 10V17M84.500 7.500V17M88 4.500V17" stroke="#333" stroke-width="3.600" /><path d="M74 15V16.500M77.500 13V16.500M81 10.500V16.500M84.500 8V16.500M88 5V16.500" stroke="#fff" stroke-width="2.200" />
          <path d="M97 8H100L104 4V18L100 14H97Z" fill="#fff" stroke="#333" stroke-width=".8" /><path d="M106 8Q108 11 106 14M108.500 6Q112 11 108.500 16" stroke="#fff" stroke-width="1.200" fill="none" />
        </svg>
        <div class="clock"><span>11:26</span><span>20.03.2020</span></div>
        <i class="peek"></i>
      </div>
    </footer>
  </div>
</template>

<style>
html, body { margin: 0; background: #fff; overflow: hidden; }
</style>

<style scoped>
.screen { width: 1600px; height: 928px; background: #fff; font-family: "Liberation Sans", Arial, sans-serif; overflow: hidden; }
.screen * { box-sizing: border-box; }
svg { display: block; }
i { font-style: normal; }

.title { height: 22px; display: flex; align-items: flex-start; background: linear-gradient(#94afcc, #b3cae3); border-top: 1px solid #35404c; padding-left: 2px; }
.logo { width: 16px; height: 18px; }
.caption { margin-left: 8px; font: 11.700px/19px "Open Sans", "Noto Sans", sans-serif; color: #000; flex: 1; letter-spacing: -.14px; }
.winbtns { display: flex; gap: 2px; padding: 1px 2px 0 0; }
.wb { width: 31px; height: 17px; border: 1px solid #56657a; border-radius: 3px; background: linear-gradient(#d2dfee 0 45%, #a2b9d3 50%, #bfd4e9); box-shadow: inset 0 0 0 1px #dfe9f4; }
.wb svg { width: 29px; height: 15px; }
.wb.close { border-color: #4a1c20; background: linear-gradient(#dfa297 0 45%, #b73f26 50%, #d4715a); box-shadow: inset 0 0 0 1px #e6b1a8; }
.menu { height: 20px; display: flex; background: linear-gradient(#fdfdff 0 30%, #dde3f2 40%, #d5dcee 80%, #c3cade 90%, #f6f8fc 96%); padding-left: 7px; font: 11.800px/19px "Open Sans", "Noto Sans", sans-serif; color: #000; letter-spacing: -.27px; white-space: nowrap; }
.audio { margin-left: auto; padding-right: 7px; letter-spacing: -.22px; }

.app { height: 818px; display: flex; background: #262626; }
.mixer { width: 87px; background: #454646; border-right: 1px solid #111; display: flex; flex-direction: column; overflow: hidden; }
.inserts { height: 192px; width: 85px; padding-left: 1px; background: #2e3030; border-bottom: 2px solid #6a6a6a; overflow: hidden; }
.inserts div { height: 14px; border-bottom: 1px solid #262727; border-top: 1px solid #363737; background: #2d2e2e; font: bold 9.200px/12px "Liberation Sans", sans-serif; letter-spacing: .15px; color: #6c6c6c; padding-left: 4px; white-space: nowrap; overflow: hidden; }
.sends { height: 196px; width: 85px; padding: 5px 0 0 1px; background: #424444; }
.send { height: 12px; margin-bottom: 2px; background: #2c2c2c; display: flex; align-items: center; font: bold 9.600px/11px "Liberation Sans", sans-serif; color: #b5b5b5; white-space: nowrap; }
.send span { width: 70px; overflow: hidden; padding-left: 3px; }
.send svg { width: 11px; height: 11px; margin-left: 1px; }
.slot { height: 12px; border-radius: 0 6px 6px 0; background: #313131; border: 1px solid #2a2a2a; margin-bottom: 2px; }
.fxroute { height: 45px; background: #333; }
.fxroute svg { width: 87px; height: 45px; }
.fxi { font: italic 13px "Liberation Serif", serif; fill: #d0d0d0; }
.mrs { font: bold 9px "Liberation Sans", sans-serif; }
.rt { font: 8.400px "Liberation Sans", sans-serif; fill: #c0c0c0; }
.trim { height: 19px; border-top: 1px solid #0b0b0b; border-bottom: 1px solid #0b0b0b; display: flex; background: #3c3e3e; font: 10.500px/17px "Liberation Sans", sans-serif; color: #7c7c7c; }
.trim svg { width: 26px; height: 17px; background: #262626; flex: none; }
.trim span { padding-left: 6px; background: #444747; flex: 1; }
.panbox { height: 82px; background: linear-gradient(#4e5353, #696e6e); border-bottom: 1px solid #0b0b0b; }
.panbox svg { width: 87px; height: 82px; overflow: visible; }
.cen { font: 9.800px "Liberation Sans", sans-serif; fill: #161616; text-anchor: middle; }
.mono { font: 10.300px "Liberation Sans", sans-serif; fill: #2c2f2f; }
.strip { height: 261px; background: linear-gradient(#222, #2b2b2b); }
.strip svg { width: 87px; height: 261px; }
.db { font: 10px "Liberation Sans", sans-serif; fill: #767676; text-anchor: end; }
.ms { font: 11px "Liberation Sans", sans-serif; fill: #18a874; text-anchor: middle; }
.sc { font: 10px "Liberation Sans", sans-serif; fill: #757575; }
.sc .lit { fill: #f0f0f0; stroke: #f0f0f0; stroke-width: .3px; }
.master { height: 17px; background: #1e1e1e; color: #eee; font: bold 9.500px/15px "Liberation Sans", sans-serif; text-align: center; letter-spacing: -.1px; }
.mfoot { flex: 1; background: #484848; border-bottom: 1px solid #777; }

.right { flex: 1; display: flex; flex-direction: column; padding-left: 5px; min-width: 0; }
.work { height: 763px; display: flex; padding-left: 2px; }
.tcp { width: 367px; padding-right: 8px; display: flex; flex-direction: column; background: #262626; }
.toolbar { height: 61px; margin: 3px 0 5px; border: solid #060606; border-width: 1px 1px 2px 0; background: repeating-linear-gradient(#333 0 1px, #2b2b2b 1px 3px); padding-top: 14px; }
.tools { display: flex; width: 300px; height: 29px; background: #080808; padding: 1px; gap: 2px; }
.tb { width: 28px; height: 27px; background: linear-gradient(#3a3a3a, #262626); }
.tb svg { width: 28px; height: 27px; }
.tb.on { background: radial-gradient(#18b9b2, #0d5f60 85%); }
.tb.off { background: #6b6b6b; border: 1px solid #8a8a8a; }
.tb.off svg, .tb.dim svg { width: 26px; height: 25px; }
.tb.dim { background: #424242; border: 1px solid #6a6a6a; }
.tb.off.dark { background: #4c4c4c; border-color: #666; }
.tracks { flex: 1; overflow: hidden; display: flex; flex-direction: column; justify-content: flex-start; border-bottom: 1px solid #777; }
.track { height: 24px; flex: none; display: flex; background: #262626; }
.track:first-child { margin-top: -5px; }
.depth { background: #5f989b; flex: none; }
.panel { flex: 1; display: flex; align-items: center; justify-content: flex-end; background: linear-gradient(#2b2f2f, #272c2c); border-bottom: 1px solid #1c1c1c; min-width: 0; height: 24px; }
.sel .panel { background: linear-gradient(#6e7070, #676969); }
.arm { width: 20px; height: 20px; margin-left: 7.500px; flex: none; z-index: 1; }
.name { flex: 1; height: 19px; margin-left: -10px; padding-left: 11px; background: #1f1f1f; color: #45c6ae; font: 10px/17px "Liberation Sans", sans-serif; letter-spacing: -.12px; -webkit-text-stroke: .35px #45c6ae; white-space: nowrap; min-width: 0; }
.name.tight { letter-spacing: -.45px; padding-left: 12px; }
.knob { width: 20px; height: 20px; margin-left: -10px; flex: none; }
.route { width: 24px; height: 19px; margin-left: 3px; background: #262626; border: 1px solid #0d0d0d; flex: none; }
.sqs { display: flex; gap: 3px; padding: 2px 0 0 2px; background: #2b2d2e; height: 7px; }
.sqs i { width: 4px; height: 4px; }
.sqs .g { background: #10d092; }
.route svg { width: 22px; height: 9px; }
.route text { font: 7.600px "Liberation Sans", sans-serif; fill: #b8b8b8; }
.pan { width: 20px; height: 20px; margin-left: 4px; flex: none; }
.btns { display: flex; width: 37px; height: 19px; margin-left: 3px; background: #111; gap: 1px; padding: 1px; flex: none; }
.btns b { flex: 1; background: linear-gradient(#414141, #2f2f2f); color: #12d292; font: bold 10px/17px "Liberation Sans", sans-serif; text-align: center; }
.btns .muted { background: #fb1e06; color: #3a0a04; font-weight: normal; }
.fx { display: flex; width: 27px; height: 19px; margin: 0 18px 0 5px; border: 1px solid #141414; flex: none; color: #c4c4c4; font: 9.800px/17px "Liberation Sans", sans-serif; background: #333; -webkit-text-stroke: .35px currentColor; }
.fx span { width: 14px; text-align: center; background: #454545; }
.fx svg { width: 11px; height: 17px; }
.fx.lit span { background: #16b287; color: #fff; }
.fx.lit svg { background: #2c4947; color: #17a49a; }
.num { width: 18px; background: #1f1f1f; display: flex; flex-direction: column; align-items: center; justify-content: center; color: #ececec; font: bold 9.200px/12px "Liberation Sans", sans-serif; flex: none; position: relative; padding-bottom: 1px; }
.num.open { justify-content: flex-start; padding-top: 3px; }
.num.open svg { width: 8px; height: 7px; flex: none; }
.num.open span { margin-top: 3px; }
.num .fold { width: 12px; height: 10px; margin-top: 7px; }
.dot { position: absolute; left: -2px; top: 9px; width: 5px; height: 5px; border-radius: 3px; background: #3fd8cf; }
.vu { width: 14px; padding: 2px 2px; display: flex; flex: none; background: repeating-linear-gradient(#171717 0 2px, #202020 2px 3px) content-box, #222; }
.vu b { width: 10px; height: 10px; background: #b23a3a; color: #f0d8d8; font: bold 8px/10px "Liberation Sans", sans-serif; text-align: center; border-radius: 1px; }

.arrange { flex: 1; display: flex; flex-direction: column; background: #1e1e1e; min-width: 0; }
.ruler { width: 1139px; height: 69px; flex: none; }
.bar { font: 11px "Liberation Sans", sans-serif; fill: #9b9b9b; stroke: #9b9b9b; stroke-width: .35px; }
.time { font: 9.400px "Liberation Sans", sans-serif; fill: #a2a2a2; stroke: #a2a2a2; stroke-width: .15px; }
.field { flex: 1; display: flex; overflow: hidden; }
.lanes { width: 1121px; position: relative; overflow: hidden; }
.grid { position: absolute; left: 0; top: 0; width: 1121px; height: 694px; }
.cursor { z-index: 2; }
.lane { height: 24px; background: #1d1d1d; border-bottom: 1px solid #303030; }
.grid + .lane { margin-top: -5px; }
.lane.alt { background: #202020; }
.lane.muted { background: #0d0d0d; border-color: #1c1c1c; }
.lane svg { width: 1121px; height: 24px; position: relative; z-index: 1; }
.faded { opacity: .42; }
.vbar { width: 18px; height: 694px; background: #242424; }

.under { height: 18px; display: flex; background: #252525; }
.hint { width: 369px; padding-left: 2px; color: #a8a8a8; font: 10.300px/18px "Liberation Sans", sans-serif; letter-spacing: -.05px; }
.hbar { width: 1139px; height: 19px; }

.transport { height: 37px; display: flex; background: #333; border-top: 1px solid #262626; border-bottom: 1px solid #2a2a33; }
.deck { width: 422px; height: 35px; flex: none; }
.rate { font: bold 9px "Liberation Mono", monospace; fill: #0f1214; stroke: #555; stroke-width: .3px; }
.status { width: 361px; background: #292929; display: flex; align-items: center; padding: 3px 0 0 9px; color: #308fd0; white-space: nowrap; flex: none; border-right: 1px solid #333; }
.status b { font-size: 24.500px; width: 222px; letter-spacing: .2px; }
.status span { font-size: 18.200px; }
.bpm { width: 50px; background: #292929; color: #989898; font: bold 10px/18px "Liberation Sans", sans-serif; display: flex; flex-direction: column; align-items: center; border-right: 1px solid #1a1a1a; }
.sig { width: 40px; background: #2d2d2d; color: #a2a2a2; font: 9.800px/35px "Liberation Sans", sans-serif; text-align: center; }
.speed { width: 135px; background: #292929; }
.sp1 { display: flex; height: 18px; color: #868686; font: bold 10px/17px "Liberation Sans", sans-serif; }
.sp1 span { width: 56px; background: #363636; padding-left: 4px; letter-spacing: -.15px; }
.sp1 b { flex: 1; text-align: center; border: 1px solid #1d1d1d; background: #2c2c2c; }
.speed svg { width: 135px; height: 15px; margin-top: 2px; }
.selection { flex: 1; display: flex; align-items: center; justify-content: flex-end; gap: 2px; color: #9a9a9a; font: 9.600px/17px "Liberation Sans", sans-serif; padding: 0 7px 0 0; }
.selection i { width: 99px; height: 20px; border: 1px solid #1c1c1c; border-right-color: #262626; background: #303030; text-align: center; }
.selection span { letter-spacing: -.2px; margin-right: 2px; }

.taskbar { height: 40px; display: flex; align-items: center; border-top: 1px solid #d5e2f0; background: linear-gradient(90deg, #8393ab 0, #8797af 70px, #a6bfdc 105px, #a6bfdc 1310px, #8294aa 1350px, #8294aa); padding-left: 7px; }
.ti { flex: none; height: 38px; }
.start { width: 40px; }
.npp { width: 32px; margin-left: 26px; }
.exp { width: 32px; margin-left: 30px; }
.task { height: 39px; border: 1px solid #33465c; border-radius: 3px; background: linear-gradient(120deg, #d3e0ef 40%, #b8cce2 60%, #c3d4e8); box-shadow: inset 0 0 0 1px #dce7f3; flex: none; display: flex; align-items: center; justify-content: center; }
.task svg { height: 32px; }
.yb { width: 60px; margin-left: 16px; }
.vs { width: 34px; margin-left: 15px; }
.ps { width: 30px; margin-left: 30px; }
.pst { font: 600 16.500px "Open Sans", sans-serif; fill: #12b9f0; letter-spacing: -.5px; }
.pc { width: 34px; margin-left: 31px; }
.pct { font: bold 11px "Liberation Sans", sans-serif; fill: #fff; }
.py { width: 34px; margin-left: 30px; }
.pb { width: 60px; margin-left: 12px; }
.fl { width: 32px; margin-left: 16px; }
.rb { width: 60px; margin-left: 16px; }
.rb svg { width: 30px; }
.tray { margin-left: auto; display: flex; align-items: center; height: 39px; color: #fff; }
.ru { font: 13px "Open Sans", sans-serif; margin-right: 12px; margin-top: -6px; letter-spacing: -.6px; }
.tray svg { width: 116px; height: 22px; }
.clock { width: 82px; display: flex; flex-direction: column; text-align: center; font: 11.900px/17px "Open Sans", sans-serif; margin-right: -3px; letter-spacing: -.5px; }
.peek { width: 15px; height: 38px; background: linear-gradient(160deg, #8394a6, #5b6e83 60%, #8fa3b8); border: 1px solid #3f4e60; box-shadow: inset 0 0 0 1px #a9bbcd; }
</style>
